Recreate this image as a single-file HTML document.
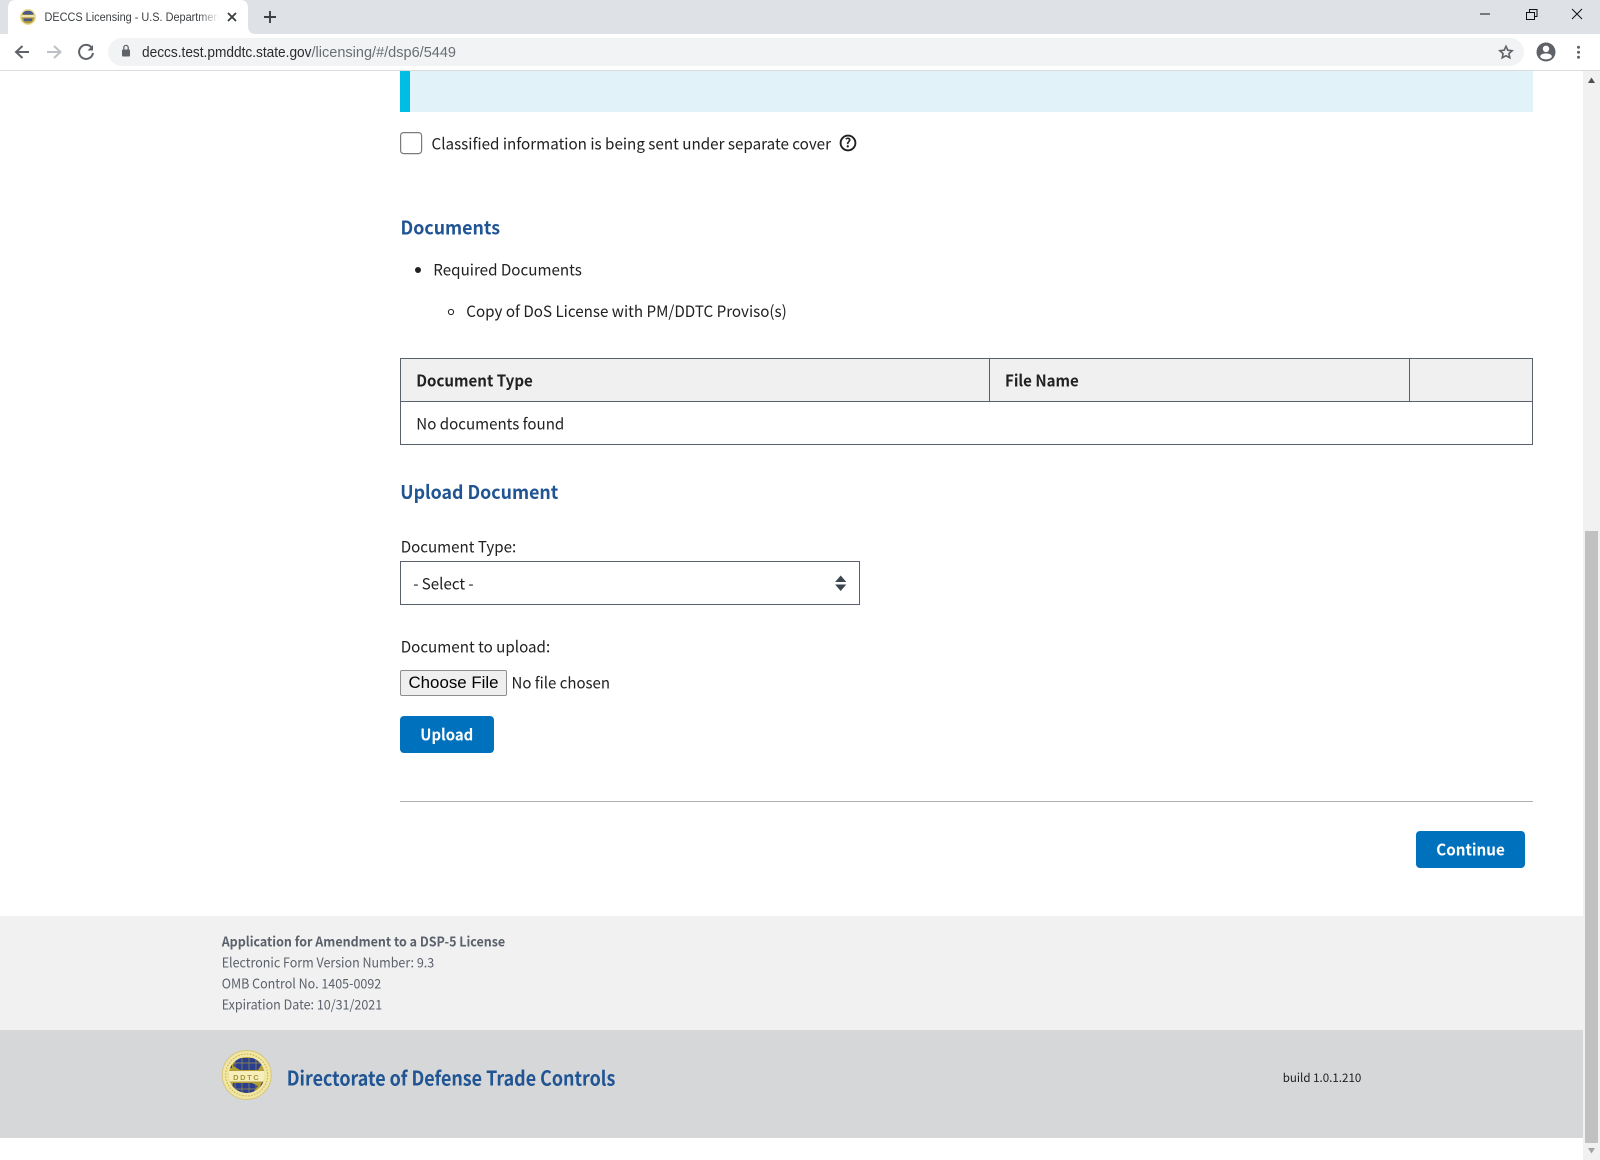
<!DOCTYPE html>
<html lang="en">
<head>
<meta charset="utf-8">
<title>DECCS Licensing - U.S. Department of State</title>
<style>
html,body{margin:0;padding:0;background:#fff;width:1600px;height:1160px;overflow:hidden}
svg{display:block;position:absolute;left:0;top:0}
text{font-family:"Noto Sans CJK SC","Liberation Sans",sans-serif;font-size:15.8px;fill:#212121;white-space:pre}
.b{font-weight:700}
.h{font-weight:700;font-size:18.6px;fill:#205493}
.ui{font-family:"Liberation Sans",sans-serif;font-size:14px}
.f{font-size:13.4px;fill:#5b616b}
</style>
</head>
<body>
<svg width="1600" height="1160" viewBox="0 0 1600 1160" xmlns="http://www.w3.org/2000/svg">
<defs>
<linearGradient id="fade" x1="0" x2="1" y1="0" y2="0"><stop offset="0" stop-color="#fff" stop-opacity="0"/><stop offset="1" stop-color="#fff"/></linearGradient>
<clipPath id="gl"><circle cx="246.7" cy="1075" r="18"/></clipPath>
<clipPath id="fav"><circle cx="28" cy="17" r="6.5"/></clipPath>
</defs>

<!-- browser chrome -->
<rect x="0" y="0" width="1600" height="34" fill="#dee1e6"/>
<rect x="0" y="34" width="1600" height="36" fill="#fff"/>
<rect x="0" y="70" width="1600" height="1" fill="#dadce0"/>
<path d="M0 34H8V8Q8 0 16 0H240Q248 0 248 8V26Q248 34 256 34H0Z" fill="#fff"/>
<circle cx="28" cy="17" r="8" fill="#e9dc96"/>
<circle cx="28" cy="17" r="6.5" fill="#a8963a"/>
<g clip-path="url(#fav)"><rect x="23" y="11" width="10" height="3.5" fill="#4a5a8e"/><rect x="20" y="15" width="16" height="2.4" fill="#eee3a8"/><rect x="24" y="18.5" width="8" height="2.5" fill="#4a5a8e"/></g>
<text class="ui" x="44.5" y="21" style='font-size:12.2px;fill:#3c4043' textLength="178" lengthAdjust="spacingAndGlyphs">DECCS Licensing - U.S. Department</text>
<rect x="198" y="4" width="21" height="26" fill="url(#fade)"/>
<rect x="219" y="4" width="26" height="26" fill="#fff"/>
<path d="M228 13L236 21M236 13L228 21" stroke="#3c4043" stroke-width="1.9" fill="none"/>
<path d="M264 17H276M270 11V23" stroke="#3c4043" stroke-width="1.9" fill="none"/>

<path d="M1480 14H1490" stroke="#111" stroke-width="1" fill="none"/>
<path d="M1526.5 12.5H1534.5V19.5H1526.5ZM1529.5 12V9.5H1537V16.5H1535" stroke="#111" stroke-width="1" fill="none"/>
<path d="M1572 9L1582 19M1582 9L1572 19" stroke="#111" stroke-width="1" fill="none"/>

<path d="M29 52H17M22.5 46L16 52L22.5 58" stroke="#5f6368" stroke-width="2" fill="none"/>
<path d="M47 52H59.5M54 46L60.5 52L54 58" stroke="#bdc1c6" stroke-width="2" fill="none"/>
<path d="M91.5 47.5A7 7 0 1 0 93 53" stroke="#5f6368" stroke-width="2" fill="none"/>
<path d="M93 45V50.5H87.5Z" fill="#5f6368"/>
<rect x="108" y="38" width="1416" height="28" rx="14" fill="#f1f3f4"/>
<rect x="122" y="49.5" width="8" height="7" rx="1" fill="#5f6368"/>
<path d="M123.8 50V47.6A2.2 2.2 0 0 1 128.2 47.6V50" stroke="#5f6368" stroke-width="1.3" fill="none"/>
<text class="ui" x="142" y="57" style="font-size:14.3px;fill:#2a2b2e" textLength="169.5" lengthAdjust="spacingAndGlyphs">deccs.test.pmddtc.state.gov</text>
<text class="ui" x="311.5" y="57" style="font-size:14.3px;fill:#6a6e73" textLength="144.5" lengthAdjust="spacingAndGlyphs">/licensing/#/dsp6/5449</text>
<path d="M1506 46.3L1507.8 50.2L1512.1 50.7L1508.9 53.6L1509.8 57.8L1506 55.7L1502.2 57.8L1503.1 53.6L1499.9 50.7L1504.2 50.2Z" stroke="#5f6368" stroke-width="1.6" fill="none"/>
<circle cx="1546" cy="52" r="9.5" fill="#5f6368"/>
<circle cx="1546" cy="48.8" r="3.2" fill="#fff"/>
<ellipse cx="1546" cy="56.4" rx="5.8" ry="3" fill="#fff"/>
<circle cx="1578.5" cy="47.3" r="1.5" fill="#5f6368"/><circle cx="1578.5" cy="52.2" r="1.5" fill="#5f6368"/><circle cx="1578.5" cy="57.2" r="1.5" fill="#5f6368"/>

<!-- alert -->
<rect x="400" y="71" width="1133" height="41" fill="#e1f3f8"/>
<rect x="400" y="71" width="10" height="41" fill="#00bde3"/>

<!-- classified -->
<rect x="400.6" y="132.6" width="21" height="21" rx="3" fill="#fff" stroke="#7b7b7b" stroke-width="1.2"/>
<text x="431.5" y="149.3" textLength="399.5" lengthAdjust="spacingAndGlyphs">Classified information is being sent under separate cover</text>
<circle cx="848" cy="143" r="7.4" fill="none" stroke="#212121" stroke-width="1.9"/>
<text x="848" y="147.5" text-anchor="middle" class="b" style="font-size:12.5px">?</text>

<!-- documents -->
<text class="h" x="400.5" y="234.3" textLength="99.5" lengthAdjust="spacingAndGlyphs">Documents</text>
<circle cx="418" cy="270" r="3" fill="#212121"/>
<text x="433.3" y="275.3" textLength="148.5" lengthAdjust="spacingAndGlyphs">Required Documents</text>
<circle cx="451" cy="312" r="2.6" fill="none" stroke="#212121" stroke-width="1"/>
<text x="466.3" y="316.8" textLength="320.5" lengthAdjust="spacingAndGlyphs">Copy of DoS License with PM/DDTC Proviso(s)</text>

<!-- table -->
<rect x="400.5" y="358.5" width="1132" height="86" fill="#fff"/>
<rect x="400.5" y="358.5" width="1132" height="43" fill="#f0f0f0"/>
<rect x="400.5" y="358.5" width="1132" height="86" fill="none" stroke="#5b616b" stroke-width="1"/>
<path d="M400 401.5H1533M989.5 358V402M1409.5 358V402" stroke="#5b616b" stroke-width="1" fill="none"/>
<text class="b" x="416.3" y="386.3" textLength="116.5" lengthAdjust="spacingAndGlyphs">Document Type</text>
<text class="b" x="1005" y="386.3" textLength="73.8" lengthAdjust="spacingAndGlyphs">File Name</text>
<text x="416.3" y="429.3" textLength="148" lengthAdjust="spacingAndGlyphs">No documents found</text>

<!-- upload -->
<text class="h" x="400.3" y="498.8" textLength="158" lengthAdjust="spacingAndGlyphs">Upload Document</text>
<text x="400.7" y="552.3" textLength="115.5" lengthAdjust="spacingAndGlyphs">Document Type:</text>
<rect x="400.5" y="561.5" width="459" height="43" fill="#fff" stroke="#5b616b" stroke-width="1"/>
<text x="413.2" y="589.3" textLength="60.5" lengthAdjust="spacingAndGlyphs">- Select -</text>
<path d="M840.7 575.5L846.3 582H835.1ZM840.7 591L846.3 584.5H835.1Z" fill="#3d4551"/>
<text x="400.7" y="652.3" textLength="149.5" lengthAdjust="spacingAndGlyphs">Document to upload:</text>
<rect x="400.5" y="670.5" width="106" height="25" rx="1.5" fill="#efefef" stroke="#8f8f8f" stroke-width="1"/>
<text x="408.5" y="688" style='font-family:"Liberation Sans",sans-serif;font-size:17px;fill:#000' textLength="90" lengthAdjust="spacingAndGlyphs">Choose File</text>
<text x="511.5" y="688.3" textLength="98.5" lengthAdjust="spacingAndGlyphs">No file chosen</text>
<rect x="400" y="716" width="94" height="37" rx="4" fill="#0071bc"/>
<text class="b" x="420.3" y="740.3" style="fill:#fff" textLength="53" lengthAdjust="spacingAndGlyphs">Upload</text>

<rect x="400" y="801" width="1133" height="1" fill="#aeb0b5"/>
<rect x="1416" y="831" width="109" height="37" rx="4" fill="#0071bc"/>
<text class="b" x="1436.3" y="855.3" style="fill:#fff" textLength="68.5" lengthAdjust="spacingAndGlyphs">Continue</text>

<!-- footer -->
<rect x="0" y="916" width="1583" height="114" fill="#f1f1f1"/>
<rect x="0" y="1030" width="1583" height="108" fill="#d6d7d9"/>
<text class="f b" x="221.7" y="946.3" textLength="283.5" lengthAdjust="spacingAndGlyphs">Application for Amendment to a DSP-5 License</text>
<text class="f" x="221.7" y="967.3" textLength="212.5" lengthAdjust="spacingAndGlyphs">Electronic Form Version Number: 9.3</text>
<text class="f" x="221.7" y="988.3" textLength="159.5" lengthAdjust="spacingAndGlyphs">OMB Control No. 1405-0092</text>
<text class="f" x="221.7" y="1009.3" textLength="160.5" lengthAdjust="spacingAndGlyphs">Expiration Date: 10/31/2021</text>

<!-- seal -->
<circle cx="246.7" cy="1075" r="24.5" fill="#f1e6a2" stroke="#d6c678" stroke-width="1"/>
<circle cx="246.7" cy="1075" r="21" fill="none" stroke="#c9b75c" stroke-width="1.2" stroke-dasharray="1.5 1.5"/>
<circle cx="246.7" cy="1075" r="18" fill="#b5a034"/>
<g clip-path="url(#gl)">
<path d="M236 1058H256L262 1064L258 1070H240L233 1066ZM233 1083H252L258 1086L252 1094H240L232 1088Z" fill="#2c3f8f"/>
<path d="M262 1082H270V1092H258ZM225 1062H232V1068H225Z" fill="#2c3f8f"/>
<path d="M228 1057V1095M235 1057V1095M242 1057V1095M249 1057V1095M256 1057V1095M263 1057V1095M228 1063H266M228 1089H266" stroke="#b5a034" stroke-width=".7" fill="none" opacity=".8"/>
<rect x="226" y="1071" width="42" height="10.5" fill="#f6eebb"/>
</g>
<text x="246.7" y="1079.8" text-anchor="middle" class="b" style='font-family:"Liberation Sans",sans-serif;font-size:7.5px;fill:#a8963a;letter-spacing:1.6px'>DDTC</text>

<text x="286.8" y="1085.3" class="b" style="font-size:20px;fill:#205493" textLength="328.5" lengthAdjust="spacingAndGlyphs">Directorate of Defense Trade Controls</text>
<text x="1282.7" y="1082" style="font-size:11.8px" textLength="78.6" lengthAdjust="spacingAndGlyphs">build 1.0.1.210</text>

<!-- scrollbar -->
<rect x="1583" y="71" width="17" height="1089" fill="#f1f1f1"/>
<rect x="1585" y="531" width="13" height="612" fill="#c1c1c1"/>
<path d="M1591.5 77.5L1595 83H1588Z" fill="#505050"/>
<path d="M1591.5 1153.5L1595 1148H1588Z" fill="#a3a3a3"/>
</svg>
</body>
</html>
